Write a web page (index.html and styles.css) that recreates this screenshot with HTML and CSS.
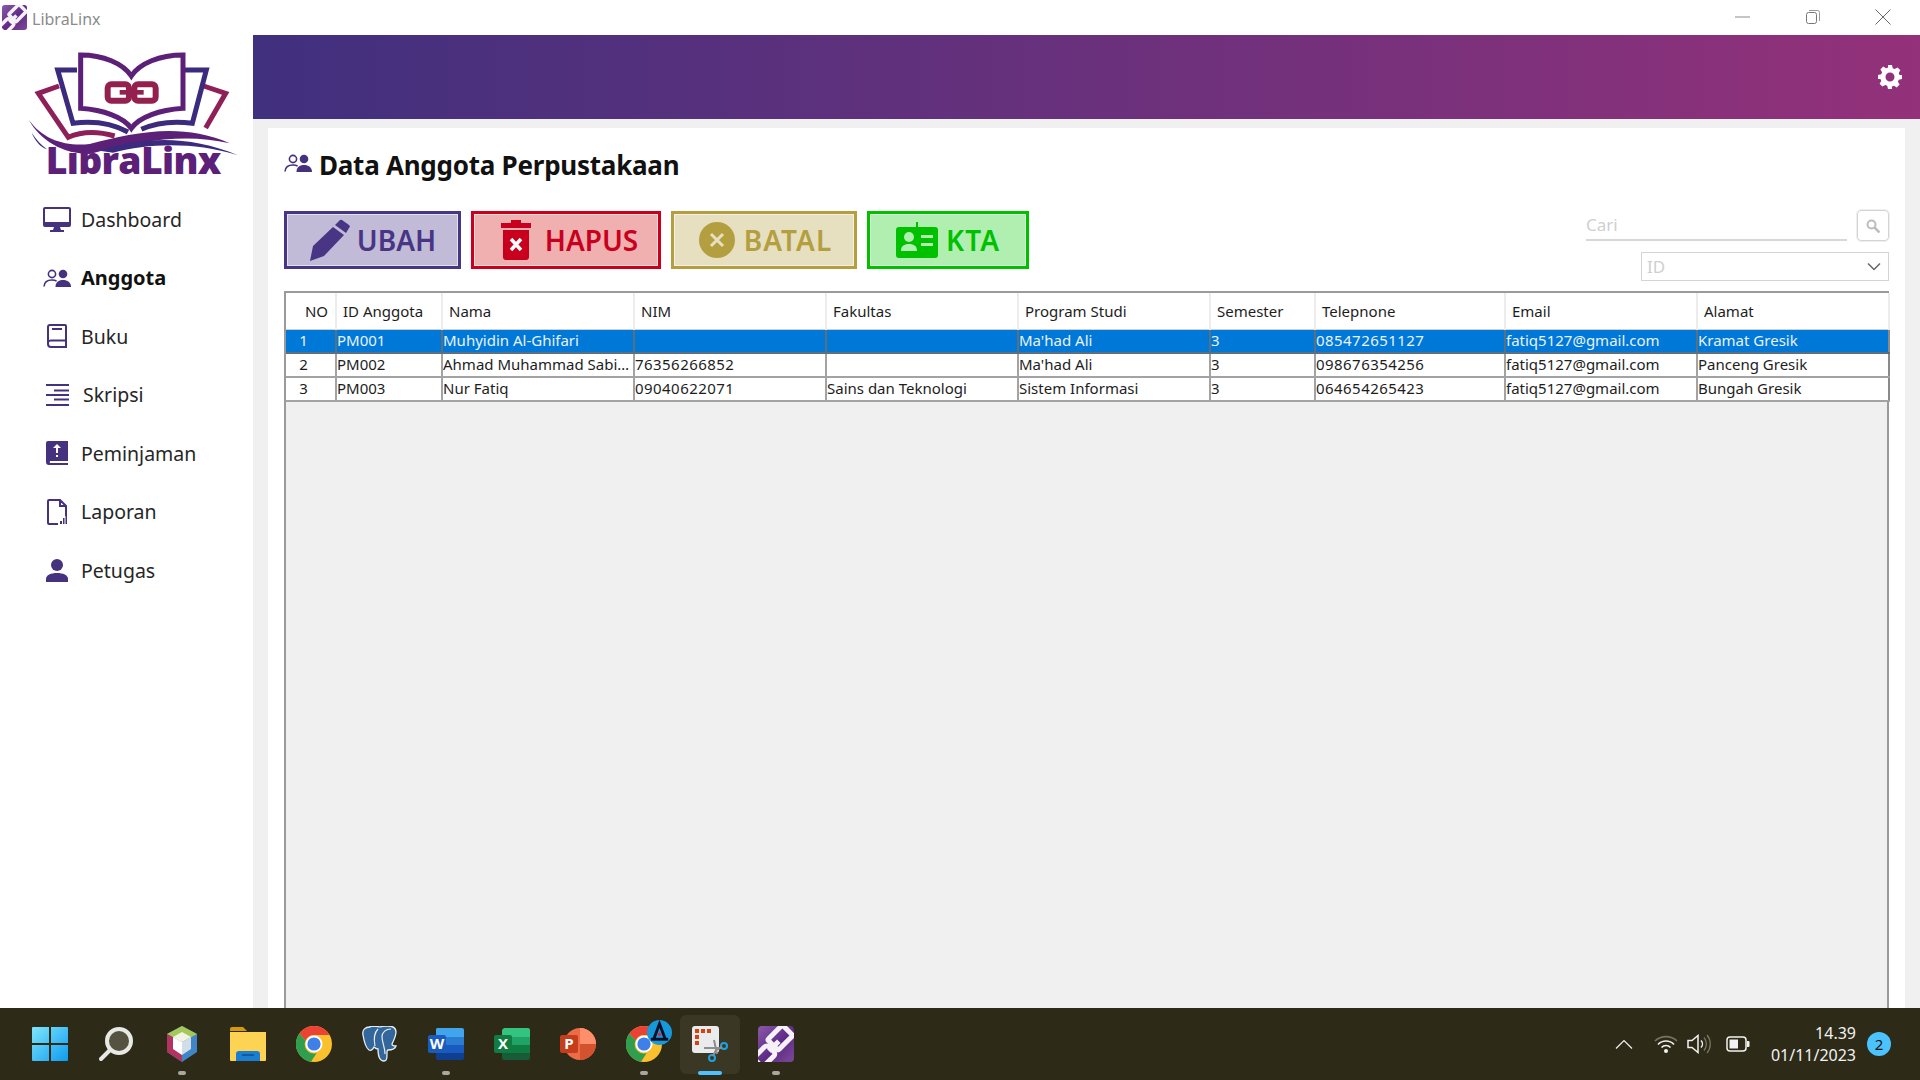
FILE: index.html
```html
<!DOCTYPE html>
<html lang="id">
<head>
<meta charset="utf-8">
<title>LibraLinx</title>
<link rel="stylesheet" href="styles.css">
</head>
<body>
<svg class="defs" width="0" height="0" aria-hidden="true">
  <defs><linearGradient id="mark" x1="0" y1="0" x2="1" y2="1"><stop offset="0" stop-color="#8a5aa8"/><stop offset=".55" stop-color="#5e2a86"/><stop offset="1" stop-color="#7c4a98"/></linearGradient></defs>
  <symbol id="users" viewBox="0 0 28 18">
    <circle cx="9" cy="5" r="3.600" fill="none" stroke="currentColor" stroke-width="1.600"/>
    <path d="M1 17.500c.3-4.600 3.300-6.500 8-6.500 2 0 3.500.4 4.600 1.200" fill="none" stroke="currentColor" stroke-width="1.600"/>
    <circle cx="20" cy="5" r="4.300" fill="currentColor"/>
    <path d="M12.500 18c0-4.700 3-7 7.500-7s8 2.300 8 7z" fill="currentColor"/>
  </symbol>
  <symbol id="logo-mark" viewBox="0 0 36 36">
    <rect width="36" height="36" rx="4" fill="url(#mark)"/>
    <g transform="rotate(-45 18 18)" fill="none" stroke="#f5f1f7" stroke-width="5">
      <rect x="15" y="9" width="21" height="15" rx="1.500"/>
      <rect x="-8" y="12" width="19" height="13" rx="3"/>
      <path d="M8 18h14"/>
    </g>
  </symbol>
  <symbol id="chrome" viewBox="0 0 36 36">
    <circle cx="18" cy="18" r="18" fill="#fbc02d"/>
    <path d="M18 0a18 18 0 0 1 15.600 9H18a9 9 0 0 0-8.300 5.500L3.200 7.600A18 18 0 0 1 18 0z" fill="#ea4335"/>
    <path d="M3.200 7.600l6.500 7a9 9 0 0 0 11 12.400L15 35.800A18 18 0 0 1 3.200 7.600z" fill="#2f9e4f"/>
    <circle cx="18" cy="18" r="8.500" fill="#fff"/>
    <circle cx="18" cy="18" r="6.600" fill="#3f7fe8"/>
  </symbol>
</svg>

<div class="app">
  <header class="titlebar">
    <div class="title-left">
      <svg class="title-icon"><use href="#logo-mark"/></svg>
      <span class="title-text">LibraLinx</span>
    </div>
    <div class="win-controls">
      <svg class="win-btn" viewBox="0 0 16 16"><path d="M0 8h15" stroke="#8a8a8a" fill="none"/></svg>
      <svg class="win-btn" viewBox="0 0 16 16"><rect x="1.500" y="3.500" width="10" height="11" rx="2" fill="none" stroke="#777"/><path d="M4 1.500h8.500a2 2 0 0 1 2 2V12" fill="none" stroke="#999"/></svg>
      <svg class="win-btn" viewBox="0 0 16 16"><path d="M.5.5l15 15M15.500.5l-15 15" stroke="#666" fill="none"/></svg>
    </div>
  </header>

  <div class="workspace">
    <aside class="sidebar">
      <svg class="logo" viewBox="85 150 630 412" role="img" aria-label="LibraLinx">
        <g fill="none" stroke-width="15">
          <path d="M178 258 L116 280 L206 412 C 250 392 300 395 345 408" stroke="#8e2057"/>
          <path d="M612 258 L678 280 L618 384" stroke="#8e2057"/>
          <path d="M232 210 H174 L220 370 C 280 362 340 372 385 396" stroke="#3b2a7e"/>
          <path d="M555 210 H620 L578 370 C 520 362 470 368 425 388" stroke="#3b2a7e"/>
          <path d="M243 165 C 310 165 370 190 395 228 C 420 190 480 165 550 165 V 325 C 480 330 420 350 395 385 C 370 350 310 330 243 325 Z" stroke="#5c2079"/>
          <rect x="324" y="253" width="64" height="49" rx="11" stroke="#93204f" stroke-width="18"/>
          <rect x="404" y="253" width="64" height="49" rx="11" stroke="#93204f" stroke-width="18"/>
          <path d="M360 277 H432" stroke="#93204f" stroke-width="14"/>
        </g>
        <path d="M88 360 C 130 420 200 440 270 432 C 400 400 540 365 690 430 C 560 400 430 420 270 462 C 190 462 120 420 88 360 Z" fill="#5c2079"/>
        <path d="M300 452 C 430 410 570 405 715 466 C 580 425 450 430 340 458 Z" fill="#3b2a7e"/>
        <path d="M96 398 C 110 420 125 435 142 448 C 120 440 105 420 96 398 Z" fill="#3b2a7e"/>
        <text class="logo-text" x="138" y="522">LibraLinx</text>
      </svg>
      <nav class="nav">
        <a class="nav-item">
          <span class="nav-icon"><svg width="28" height="25" viewBox="0 0 28 25"><path d="M2 0h24a2 2 0 0 1 2 2v16a2 2 0 0 1-2 2h-9l1 3h3v2H7v-2h3l1-3H2a2 2 0 0 1-2-2V2a2 2 0 0 1 2-2zm0 2v13h24V2z" fill="currentColor"/></svg></span>
          <span>Dashboard</span>
        </a>
        <a class="nav-item active">
          <span class="nav-icon"><svg width="28" height="18"><use href="#users"/></svg></span>
          <span>Anggota</span>
        </a>
        <a class="nav-item">
          <span class="nav-icon"><svg width="20" height="24" viewBox="0 0 20 24"><path d="M3 1h15a1 1 0 0 1 1 1v21H4a3 3 0 0 1-3-3V3a2 2 0 0 1 2-2zM1 18.500a3 3 0 0 1 3-2h15" fill="none" stroke="currentColor" stroke-width="2"/><path d="M5 5h10" stroke="currentColor" stroke-width="2"/></svg></span>
          <span>Buku</span>
        </a>
        <a class="nav-item nav-item-shift">
          <span class="nav-icon"><svg width="23" height="22" viewBox="0 0 23 22"><path d="M0 1h23M8 6.500h15M0 11h23M8 15.500h15M0 21h23" stroke="currentColor" stroke-width="2"/></svg></span>
          <span>Skripsi</span>
        </a>
        <a class="nav-item">
          <span class="nav-icon"><svg width="22" height="24" viewBox="0 0 22 24"><path d="M2 0h20v20H4a2 2 0 0 0 0 2h18v2H3a3 3 0 0 1-3-3V2a2 2 0 0 1 2-2z" fill="currentColor"/><path d="M11 3l4 4h-3v5h-2V7H7zM10 14h2v2h-2z" fill="#fff"/></svg></span>
          <span>Peminjaman</span>
        </a>
        <a class="nav-item">
          <span class="nav-icon"><svg width="20" height="26" viewBox="0 0 20 26"><path d="M11 25H2a1 1 0 0 1-1-1V2a1 1 0 0 1 1-1h11l6 6v10M13 1v6h6" fill="none" stroke="currentColor" stroke-width="2"/><path d="M13 22h2v3h-2zM16 19h1.500v6H16zM18.500 15H20v10h-1.500z" fill="currentColor"/></svg></span>
          <span>Laporan</span>
        </a>
        <a class="nav-item">
          <span class="nav-icon"><svg width="22" height="23" viewBox="0 0 22 23"><circle cx="11" cy="6" r="6" fill="currentColor"/><path d="M0 23v-3c0-4 5-6 11-6s11 2 11 6v3z" fill="currentColor"/></svg></span>
          <span>Petugas</span>
        </a>
      </nav>
    </aside>

    <main class="main">
      <div class="banner">
        <svg class="gear" viewBox="0 0 24 24"><path fill-rule="evenodd" d="M10 0h4l.7 3.200 2 .9 2.900-1.700 2.800 2.800-1.700 2.800.9 2.100L24 10v4l-3.200.8-.9 2 1.700 2.800-2.800 2.800-2.800-1.700-2.100.9L14 24h-4l-.8-3.200-2-.9-2.800 1.700-2.800-2.800 1.700-2.800-.9-2.100L0 14v-4l3.200-.8.9-2L2.400 4.400l2.800-2.800L8 3.300l2.100-.9zM12 7.500a4.500 4.500 0 1 0 0 9 4.500 4.500 0 0 0 0-9z" fill="#fff"/></svg>
      </div>
      <section class="panel">
        <h1 class="page-title">
          <svg class="page-title-icon" width="28" height="18"><use href="#users"/></svg>
          Data Anggota Perpustakaan
        </h1>
        <div class="toolbar">
          <div class="actions">
            <button class="btn btn-ubah">
              <svg class="btn-icon" width="42" height="42" viewBox="0 0 42 42"><path d="M31 1a2 2 0 0 1 2 0l7 5a2 2 0 0 1 0 3l-3 5-11-8zM24 8l11 8-20 21-14 5 3-15z" fill="currentColor"/></svg>UBAH
            </button>
            <button class="btn btn-hapus">
              <svg class="btn-icon" width="30" height="40" viewBox="0 0 30 40"><path d="M10 0h10v3h10v5H0V3h10zM2 10h26v27a3 3 0 0 1-3 3H5a3 3 0 0 1-3-3z" fill="currentColor"/><path d="M10 19l10 11M20 19L10 30" stroke="#fff" stroke-width="3.500"/></svg>HAPUS
            </button>
            <button class="btn btn-batal">
              <svg class="btn-icon" width="36" height="36" viewBox="0 0 36 36"><circle cx="18" cy="18" r="18" fill="currentColor"/><path d="M12 12l12 12M24 12L12 24" stroke="#e6e0c0" stroke-width="3"/></svg>BATAL
            </button>
            <button class="btn btn-kta">
              <svg class="btn-icon" width="42" height="36" viewBox="0 0 42 36"><path d="M20 0h2v5h17a3 3 0 0 1 3 3v25a3 3 0 0 1-3 3H3a3 3 0 0 1-3-3V8a3 3 0 0 1 3-3h17z" fill="currentColor"/><circle cx="13" cy="15" r="5" fill="#b0efb0"/><path d="M5 29c0-5 3-7 8-7s8 2 8 7zM25 13h12v3H25zM25 21h12v3H25z" fill="#b0efb0"/></svg>KTA
            </button>
          </div>
          <div class="filters">
            <div class="search-row">
              <div class="search-input">Cari</div>
              <div class="search-btn"><svg width="14" height="14" viewBox="0 0 14 14"><circle cx="5.500" cy="5.500" r="4" fill="none" stroke="#bdbdbd" stroke-width="2"/><path d="M8.500 8.500l5 5" stroke="#bdbdbd" stroke-width="2.500"/></svg></div>
            </div>
            <div class="combo"><span>ID</span><svg width="14" height="9" viewBox="0 0 14 9"><path d="M1 1.500l6 6 6-6" fill="none" stroke="#666" stroke-width="1.500"/></svg></div>
          </div>
        </div>
        <div class="table-wrap">
          <table class="grid">
            <colgroup>
              <col class="c-no"><col class="c-id"><col class="c-wide"><col class="c-wide"><col class="c-wide"><col class="c-wide"><col class="c-sem"><col class="c-tel"><col class="c-wide"><col class="c-wide">
            </colgroup>
            <thead>
              <tr>
                <th class="th-no">NO</th><th>ID Anggota</th><th>Nama</th><th>NIM</th><th>Fakultas</th><th>Program Studi</th><th>Semester</th><th>Telepnone</th><th>Email</th><th>Alamat</th>
              </tr>
            </thead>
            <tbody>
              <tr class="selected">
                <td class="td-no">1</td><td>PM001</td><td>Muhyidin Al-Ghifari</td><td></td><td></td><td>Ma'had Ali</td><td>3</td><td class="num">085472651127</td><td>fatiq5127@gmail.com</td><td>Kramat Gresik</td>
              </tr>
              <tr>
                <td class="td-no">2</td><td>PM002</td><td>Ahmad Muhammad Sabi…</td><td class="num">76356266852</td><td></td><td>Ma'had Ali</td><td>3</td><td class="num">098676354256</td><td>fatiq5127@gmail.com</td><td>Panceng Gresik</td>
              </tr>
              <tr>
                <td class="td-no">3</td><td>PM003</td><td>Nur Fatiq</td><td class="num">09040622071</td><td>Sains dan Teknologi</td><td>Sistem Informasi</td><td>3</td><td class="num">064654265423</td><td>fatiq5127@gmail.com</td><td>Bungah Gresik</td>
              </tr>
            </tbody>
          </table>
        </div>
      </section>
    </main>
  </div>

  <footer class="taskbar">
    <div class="apps">
      <div class="app-slot">
        <svg class="app-icon" viewBox="0 0 36 36"><defs><linearGradient id="win" x1="0" y1="0" x2="1" y2="1"><stop offset="0" stop-color="#7fe6fb"/><stop offset="1" stop-color="#0e9bf0"/></linearGradient></defs><path d="M1 1h16v16H0V2a1 1 0 0 1 1-1zM19 1h16a1 1 0 0 1 1 1v15H19zM0 19h17v16H1a1 1 0 0 1-1-1zM19 19h17v15a1 1 0 0 1-1 1H19z" fill="url(#win)"/></svg>
      </div>
      <div class="app-slot">
        <svg class="app-icon" viewBox="0 0 36 36"><circle cx="21" cy="15" r="12" fill="#55523f" stroke="#e8e8e4" stroke-width="4"/><path d="M12 24L3 33" stroke="#e8e8e4" stroke-width="4" stroke-linecap="round"/></svg>
      </div>
      <div class="app-slot">
        <svg class="app-icon" viewBox="0 0 36 36"><path d="M18 0l15 8v18L18 36 3 26V8z" fill="#3f86c9"/><path d="M18 0l15 8-15 8L3 8z" fill="#a5c85a"/><path d="M3 8l15 8v20L3 26z" fill="#b0345f"/><path d="M18 6l9 5-9 5-9-5z" fill="#f1f4e4"/><path d="M9 11l9 5v13l-9-6z" fill="#fff"/><path d="M27 11l-9 5v13l9-6z" fill="#d3dde8"/></svg>
        <i class="dot"></i>
      </div>
      <div class="app-slot">
        <svg class="app-icon" viewBox="0 0 36 34"><path d="M0 2a2 2 0 0 1 2-2h11l4 4h-17z" fill="#d69a0b"/><path d="M0 5h36v28a1 1 0 0 1-1 1H1a1 1 0 0 1-1-1z" fill="#fdd354"/><path d="M6 34v-7a3 3 0 0 1 3-3 h18a3 3 0 0 1 3 3v7z" fill="#1b7fd1"/><path d="M12 28h12" stroke="#0c4f92" stroke-width="1.500"/></svg>
      </div>
      <div class="app-slot"><svg class="app-icon"><use href="#chrome"/></svg></div>
      <div class="app-slot">
        <svg class="app-icon" viewBox="0 0 36 36"><path d="M8 1C3 1 0 4 1 9c1 6 3 13 6 15 2 1 4-1 5-3 1 1 2 2 4 2 0 5 1 12 6 12 3 0 3-3 3-8 0-2 0-3 1-3 4 0 7-1 8-4-2 0-4 0-4-2 1-2 4-8 4-12 0-5-4-6-9-6-3 0-5 0-7 1-3-1-6-1-10-1z" fill="#33679b" stroke="#e6edf3" stroke-width="1.300"/><path d="M16 3c-4 4-4 12-3 17M29 3c-5 0-9 3-9 8s3 10 3 17" fill="none" stroke="#e6edf3" stroke-width="1.200"/></svg>
      </div>
      <div class="app-slot">
        <svg class="app-icon" viewBox="0 0 36 32"><path d="M9 0h25a2 2 0 0 1 2 2v7H8V1z" fill="#41a5ee"/><path d="M8 9h28v8H8z" fill="#2b7cd3"/><path d="M8 17h28v8H8z" fill="#185abd"/><path d="M8 25h28v5a2 2 0 0 1-2 2H10a2 2 0 0 1-2-2z" fill="#103f91"/><rect y="7" width="18" height="18" rx="2" fill="#1a5cbe"/><text class="app-letter" x="9" y="21">W</text></svg>
        <i class="dot"></i>
      </div>
      <div class="app-slot">
        <svg class="app-icon" viewBox="0 0 36 32"><path d="M10 0h24a2 2 0 0 1 2 2v7H8V2z" fill="#33c481"/><path d="M8 9h28v8H8z" fill="#21a366"/><path d="M8 17h28v8H8z" fill="#107c41"/><path d="M8 25h28v5a2 2 0 0 1-2 2H10a2 2 0 0 1-2-2z" fill="#185c37"/><rect y="7" width="18" height="18" rx="2" fill="#107c41"/><text class="app-letter" x="9" y="21">X</text></svg>
      </div>
      <div class="app-slot">
        <svg class="app-icon" viewBox="0 0 36 32"><circle cx="20" cy="16" r="16" fill="#ed6c47"/><path d="M20 0a16 16 0 0 1 16 16H20z" fill="#ff8f6b"/><path d="M20 16h16a16 16 0 0 1-16 16z" fill="#d35230"/><rect y="7" width="18" height="18" rx="2" fill="#c43e1c"/><text class="app-letter" x="9" y="21">P</text></svg>
      </div>
      <div class="app-slot">
        <svg class="app-icon"><use href="#chrome"/></svg>
        <svg class="overlay-a" viewBox="0 0 26 26"><circle cx="13" cy="13" r="13" fill="#1698dc"/><path d="M7 20L13 4l6 16" fill="none" stroke="#0a0f24" stroke-width="3"/><path d="M4 20h18" stroke="#0a0f24" stroke-width="3"/><circle cx="13" cy="15" r="1.800" fill="#e3223a"/></svg>
        <i class="dot"></i>
      </div>
      <div class="app-slot app-slot-active">
        <svg class="app-icon" viewBox="0 0 36 36"><rect width="27" height="27" rx="3" fill="#e9ebec"/><path d="M3 3h4v4H3zM9 3h4v4H9zM15 3h4v4h-4zM3 9h4v4H3zM3 15h4v4H3z" fill="#d9400f"/><path d="M12 22h15M22 14l3 14" stroke="#8e8e8e" stroke-width="2"/><circle cx="32" cy="20" r="3" fill="none" stroke="#1ca3e4" stroke-width="2"/><circle cx="20" cy="32" r="3" fill="none" stroke="#1ca3e4" stroke-width="2"/><path d="M30 21l-6 3-3 6" fill="none" stroke="#8e8e8e" stroke-width="2"/></svg>
        <i class="dot dot-active"></i>
      </div>
      <div class="app-slot">
        <svg class="app-icon"><use href="#logo-mark"/></svg>
        <i class="dot"></i>
      </div>
    </div>
    <div class="tray">
      <svg class="tray-icon tray-chevron" width="18" height="10" viewBox="0 0 18 10"><path d="M1 9.500l8-8 8 8" fill="none" stroke="#f2f2f2" stroke-width="1.200"/></svg>
      <svg class="tray-icon tray-wifi" width="24" height="18" viewBox="0 0 24 18"><path d="M1 6a16 16 0 0 1 22 0" fill="none" stroke="#77755f" stroke-width="1.600"/><path d="M4 9.500a11 11 0 0 1 16 0M7.500 12.500a6 6 0 0 1 9 0" fill="none" stroke="#f2f2f2" stroke-width="1.600"/><circle cx="12" cy="16" r="2" fill="#f2f2f2"/></svg>
      <svg class="tray-icon" width="24" height="20" viewBox="0 0 24 20"><path d="M1 6.500h4l6-5v17l-6-5H1z" fill="none" stroke="#f2f2f2" stroke-width="1.500"/><path d="M14 6.500a5 5 0 0 1 0 7" fill="none" stroke="#f2f2f2" stroke-width="1.500"/><path d="M17 3.500a10 10 0 0 1 0 13M20 1a14 14 0 0 1 0 18" fill="none" stroke="#77755f" stroke-width="1.300"/></svg>
      <svg class="tray-icon" width="24" height="16" viewBox="0 0 24 16"><rect x="1" y="1" width="19" height="14" rx="3" fill="none" stroke="#f2f2f2" stroke-width="1.500"/><rect x="3.500" y="3.500" width="8.500" height="9" fill="#f2f2f2"/><path d="M21 5h1.500a1 1 0 0 1 1 1v4a1 1 0 0 1-1 1H21z" fill="#f2f2f2"/></svg>
      <div class="clock"><span>14.39</span><span>01/11/2023</span></div>
      <div class="badge">2</div>
    </div>
  </footer>
</div>
</body>
</html>
```
FILE: styles.css
```css
* { box-sizing: border-box; }
html, body { margin: 0; height: 100%; overflow: hidden; }
body { font-family: "Noto Sans", "Open Sans", sans-serif; background: #fff; color: #222; }
.defs { position: absolute; }

.app { width: 1920px; height: 1080px; display: flex; flex-direction: column; }

/* title bar */
.titlebar { height: 35px; flex: none; display: flex; align-items: center; justify-content: space-between; background: #fff; }
.title-left { display: flex; align-items: center; gap: 5px; padding-left: 2px; }
.title-icon { width: 25px; height: 25px; }
.title-text { font-size: 16px; color: #8b8b8b; margin-top: 2px; }
.win-controls { display: flex; gap: 54px; padding-right: 29px; margin-top: -2px; }
.win-btn { width: 16px; height: 16px; }

/* workspace */
.workspace { flex: 1; min-height: 0; display: flex; }
.sidebar { width: 253px; flex: none; background: #fff; display: flex; flex-direction: column; }
.logo { width: 210px; height: 137.333px; margin: 15px 0 0 28px; flex: none; }
.logo-text { font: 800 112px "Open Sans", sans-serif; fill: #5c2079; letter-spacing: -2px; }
.nav { display: flex; flex-direction: column; margin-top: 2.667px; }
.nav-item { height: 58.5px; display: flex; align-items: center; gap: 10px; padding-left: 43px; font-size: 19.5px; color: #262626; }
.nav-item.active { font-size: 20px; font-weight: 700; color: #111; }
.nav-item-shift { gap: 12px; }
.nav-icon { width: 28px; display: flex; justify-content: center; color: #46317f; }

.main { flex: 1; min-width: 0; display: flex; flex-direction: column; background: #f0f0f0; }
.banner { height: 84px; flex: none; display: flex; align-items: center; justify-content: flex-end; padding-right: 18px; background: linear-gradient(90deg, #40307e, #93317a); }
.gear { width: 24px; height: 24px; }

.panel { flex: 1; min-height: 0; margin: 9px 15px 0 15px; padding: 20px 16px 0; background: #fff; display: flex; flex-direction: column; }
.page-title { margin: 0; height: 34px; display: flex; align-items: center; gap: 7px; font-size: 26px; font-weight: 700; letter-spacing: -.25px; color: #111; }
.page-title-icon { color: #46317f; margin-top: -4px; }

.toolbar { margin-top: 28px; height: 81px; flex: none; display: flex; justify-content: space-between; align-items: flex-start; }
.actions { display: flex; gap: 10px; padding-top: 1px; }
.btn { height: 58px; display: flex; align-items: center; justify-content: center; gap: 10px; padding: 0; border: 3px solid; font: 600 28px "Noto Sans", sans-serif; box-shadow: inset 0 0 0 1px rgba(255, 255, 255, .55); }
.btn-ubah { width: 177px; color: #483584; background: #c1bbd8; }
.btn-hapus { width: 190px; color: #c8001e; background: #f0b0b0; gap: 14px; padding-left: 7px; }
.btn-batal { width: 186px; color: #b39f3f; background: #e6e0c0; gap: 9px; padding-left: 3px; letter-spacing: 1px; }
.btn-kta { width: 162px; color: #00c000; background: #b0efb0; gap: 8px; letter-spacing: 1px; }
.btn-ubah .btn-icon { margin-right: -4px; }

.filters { width: 303px; display: flex; flex-direction: column; align-items: flex-end; gap: 11px; }
.search-row { display: flex; gap: 10px; width: 100%; align-items: flex-end; height: 31px; }
.search-input { flex: 1; height: 31px; border-bottom: 2px solid #d8d8d8; color: #cfcfcf; font-size: 17px; line-height: 30px; }
.search-btn { width: 32px; height: 31px; border: 1px solid #d4d4d4; border-radius: 4px; outline: 1px solid #efefef; background: #fff; display: flex; align-items: center; justify-content: center; }
.combo { width: 248px; height: 29px; border: 1px solid #d4d4d4; outline: 0; display: flex; align-items: center; justify-content: space-between; padding: 0 7px 0 5px; color: #cfcfcf; font-size: 17px; }

.table-wrap { flex: 1; min-height: 0; background: #f0f0f0; border: 2px solid #9a9a9a; border-bottom: 0; }
.grid { width: 1601px; table-layout: fixed; border-collapse: collapse; font-size: 15px; color: #1d1d1d; }
.c-no { width: 50px; }
.c-id { width: 106px; }
.c-wide { width: 192px; }
.c-sem { width: 105px; }
.c-tel { width: 190px; }
.grid th { height: 36px; background: #fff; font-weight: 400; text-align: left; padding: 0 6px; border-right: 2px solid #ececec; border-bottom: 1px solid #cfcfcf; }
.grid th.th-no { text-align: right; padding-right: 7px; }
.grid td { height: 22px; padding: 0 0 2px; white-space: nowrap; overflow: hidden; background: #fff; border: 2px solid #a3a3a3; border-top-width: 1px; line-height: 20px; }
.grid td:first-child { border-left: 0; }
.grid td:last-child { border-right-color: #8a8a8a; }
.grid td.td-no { text-align: center; padding-right: 14px; }
.grid td.num { letter-spacing: .45px; }
.selected td { background: #0078d7; color: #e8f3fc; border-color: #5c6f80; }

/* task bar */
.taskbar { height: 72px; flex: none; display: flex; align-items: center; justify-content: space-between; background: #2d2a17; }
.apps { display: flex; padding-left: 17px; }
.app-slot { position: relative; width: 66px; height: 72px; display: flex; align-items: center; justify-content: center; }
.app-icon { width: 36px; height: 36px; }
.app-slot-active::before { content: ""; position: absolute; left: 3px; top: 7px; width: 60px; height: 59px; border-radius: 6px; background: #3a3725; }
.app-slot-active .app-icon { position: relative; }
.dot { position: absolute; left: 29px; bottom: 5px; width: 8px; height: 4px; border-radius: 2px; background: #a9a89d; }
.dot-active { left: 21px; width: 24px; background: #4cc2ff; }
.overlay-a { position: absolute; left: 36px; top: 12px; width: 25px; height: 25px; }
.app-letter { font: 700 15px "Open Sans", sans-serif; fill: #fff; text-anchor: middle; }

.tray { display: flex; align-items: center; padding-right: 29px; }
.tray-icon { flex: none; margin-right: 15px; }
.tray-chevron { margin-right: 21px; }
.tray-wifi { margin-right: 9px; }
.clock { display: flex; flex-direction: column; align-items: flex-end; margin-left: 6px; margin-right: 11px; color: #f2f2f2; font-size: 16px; line-height: 22px; }
.badge { width: 24px; height: 24px; border-radius: 50%; background: #4cc2ff; color: #16160c; font-size: 15px; display: flex; align-items: center; justify-content: center; }
```
